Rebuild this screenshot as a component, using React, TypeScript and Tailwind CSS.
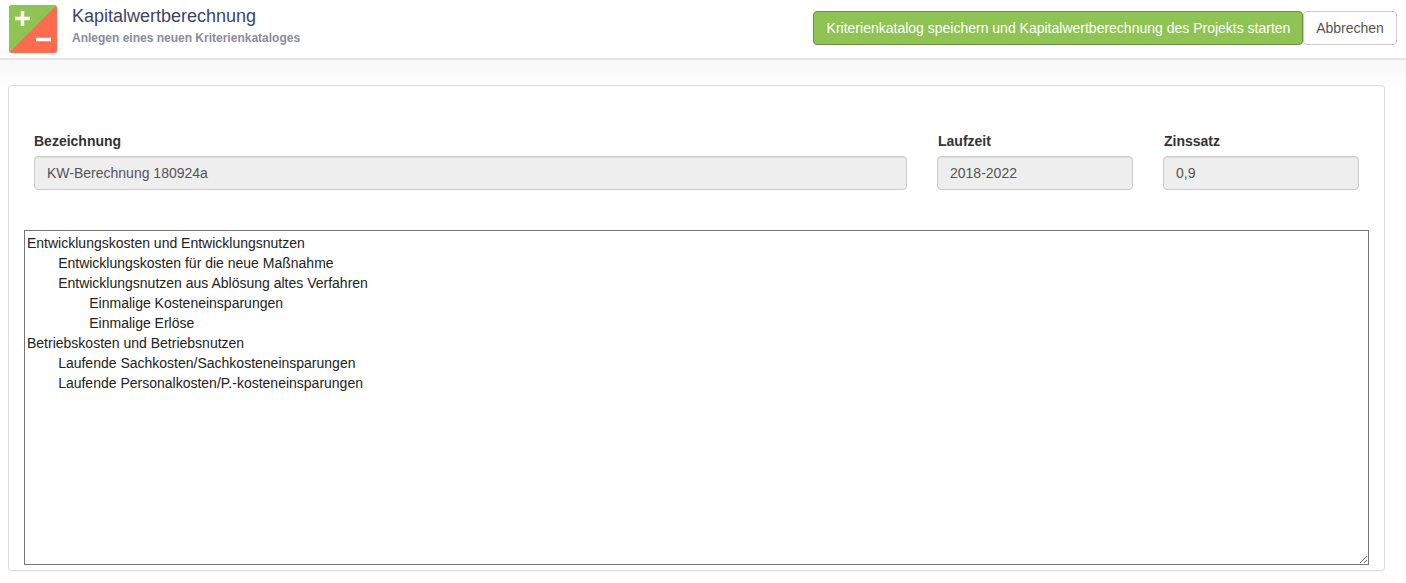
export default function App() {
  const text =
    "Entwicklungskosten und Entwicklungsnutzen\n\tEntwicklungskosten für die neue Maßnahme\n\tEntwicklungsnutzen aus Ablösung altes Verfahren\n\t\tEinmalige Kosteneinsparungen\n\t\tEinmalige Erlöse\nBetriebskosten und Betriebsnutzen\n\tLaufende Sachkosten/Sachkosteneinsparungen\n\tLaufende Personalkosten/P.-kosteneinsparungen";
  const Field = ({ label, value, cls, labelCls }: { label: string; value: string; cls: string; labelCls: string }) => (
    <div className={cls}>
      <div className={`mb-[5px] h-5 text-[14px] leading-5 font-bold text-[#333] ${labelCls}`}>{label}</div>
      <div className="h-[34px] rounded-[4px] border border-[#ccc] bg-[#eee] px-3 text-[14px] leading-[32px] text-[#555] shadow-[inset_0_1px_1px_rgba(0,0,0,0.075)]">
        {value}
      </div>
    </div>
  );
  return (
    <div className="h-[583px] overflow-hidden bg-white font-['Liberation_Sans',Arial,sans-serif]">
      <header className="flex h-[60px] items-start border-b-2 border-[#e5e5e5] bg-white pr-[9px] pl-[9px]">
        <div className="mt-[5px] h-12 w-12 shrink-0">
          <svg width="48" height="48" viewBox="0 0 48 48">
            <defs>
              <clipPath id="c"><rect width="48" height="48" rx="3" /></clipPath>
            </defs>
            <g clipPath="url(#c)">
              <rect width="48" height="48" fill="#ff6b4f" />
              <polygon points="0,0 48,0 0,48" fill="#8fc353" />
            </g>
            <path d="M6 13.5H21M13.5 6V21" stroke="#fff" strokeWidth="3.5" fill="none" />
            <path d="M27 34.5H42" stroke="#fff" strokeWidth="3.5" fill="none" />
          </svg>
        </div>
        <div className="ml-[15px] pt-[5px]">
          <div className="text-[18px] leading-[22px] text-[#3d4465]">Kapitalwertberechnung</div>
          <div className="mt-[3px] text-[12px] leading-[16px] font-bold text-[#8a8c99]">
            Anlegen eines neuen Kriterienkataloges
          </div>
        </div>
        <div className="mt-[11px] ml-auto flex">
          <button className="h-[34px] w-[490px] rounded-[4px] border border-[#6f8f4c] bg-[#8fc353] pl-px text-center text-[14px] text-white">
            Kriterienkatalog speichern und Kapitalwertberechnung des Projekts starten
          </button>
          <button className="h-[34px] w-[94px] rounded-[4px] border border-[#ccc] bg-white text-center text-[14px] text-[#555]">
            Abbrechen
          </button>
        </div>
      </header>
      <div className="h-[523px] bg-[linear-gradient(#f7f7f7,#ffffff_32px)] pt-[25px]">
        <main className="mx-2 h-[486px] w-[1377px] rounded-[4px] border border-[#ddd] bg-white shadow-[0_1px_1px_rgba(0,0,0,0.05)]">
          <div className="flex gap-[30px] px-[25px] pt-[45px]">
            <Field label="Bezeichnung" value="KW-Berechnung 180924a" cls="min-w-0 flex-1" labelCls="" />
            <Field label="Laufzeit" value="2018-2022" cls="w-[196px] shrink-0" labelCls="pl-px" />
            <Field label="Zinssatz" value="0,9" cls="w-[196px] shrink-0" labelCls="pl-px" />
          </div>
          <div className="mt-10 px-[15px]">
            <textarea
              readOnly
              defaultValue={text}
              className="block h-[335px] w-full resize-y rounded-none border border-[#767676] bg-white px-[2px] py-[2px] text-[14px] leading-5 text-[#222] outline-none"
              style={{ tabSize: 8 }}
            />
          </div>
        </main>
      </div>
    </div>
  );
}
